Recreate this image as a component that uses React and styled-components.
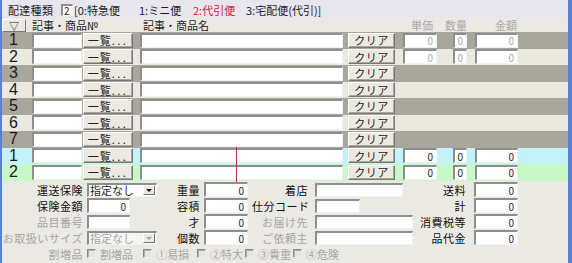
import React from "react";
import styled, { createGlobalStyle } from "styled-components";

const GlobalStyle = createGlobalStyle`
  body {
    margin: 0;
    background: #ebe9e4;
  }
`;

const TONES = {
  dark: "#a9a69d",
  light: "#ebe8e0",
  blue: "#c3f2fa",
  green: "#c8f7c8",
};

const Frame = styled.div`
  width: 572px;
  height: 263px;
  box-sizing: border-box;
  border-left: 2px solid #5b7fd4;
  border-right: 4px solid #5b7fd4;
  background: #ebe9e4;
  font-family: "Noto Sans CJK JP", sans-serif;
  font-size: 11px;
  color: #1e1e1e;
  overflow: hidden;
  display: flex;
  flex-direction: column;
`;

const TopBar = styled.div`
  height: 18px;
  box-sizing: border-box;
  padding: 2px 0 0 6px;
  background: #e7e5ee;
  display: flex;
  align-items: center;
  white-space: nowrap;
`;

const BarLabel = styled.span`
  width: 45px;
  letter-spacing: 0.3px;
`;

const KindBox = styled.span`
  width: 12px;
  height: 12px;
  margin: 0 1px 0 8px;
  box-sizing: border-box;
  border-style: solid;
  border-width: 2px 1px 1px 2px;
  border-color: #8e8e8e #f2f2f2 #f2f2f2 #8e8e8e;
  background: #fff;
  font-size: 10px;
  line-height: 9px;
  padding-left: 1px;
`;

const Option = styled.span`
  width: ${(p) => (p.$w ? `${p.$w}px` : "auto")};
  color: ${(p) => (p.$red ? "#e0203a" : "#1e1e1e")};
`;

const Header = styled.div`
  height: 14px;
  display: flex;
  align-items: flex-start;
  background: #ece9e4;
  white-space: nowrap;
`;

const SortButton = styled.button`
  width: 24px;
  height: 13px;
  margin-top: 1px;
  padding: 0;
  box-sizing: border-box;
  background: #ece9e1;
  border: 1px solid;
  border-color: #fff #777 #777 #fff;
  font-family: inherit;
  font-size: 10px;
  line-height: 10px;
  color: #222;
`;

const HeadLabel = styled.span`
  width: ${(p) => p.$w}px;
  margin-left: ${(p) => p.$ml || 0}px;
  padding-right: ${(p) => p.$pr || 0}px;
  box-sizing: border-box;
  text-align: ${(p) => (p.$right ? "right" : "left")};
  color: ${(p) => (p.$dim ? "#a8a8a8" : "#1e1e1e")};
  line-height: 15px;
`;

const RowList = styled.div`
  position: relative;
`;

const Row = styled.div`
  height: 16.5px;
  display: flex;
  align-items: center;
  background: ${(p) => TONES[p.$tone]};
`;

const RowNum = styled.span`
  width: 28px;
  padding-left: 7px;
  box-sizing: border-box;
  font-family: "Liberation Sans", Arial, sans-serif;
  font-size: 16px;
  line-height: 16px;
  color: #1a1a1a;
`;

const Field = styled.input`
  width: ${(p) => p.$w}px;
  height: ${(p) => p.$h || 15}px;
  margin: 0 0 0 ${(p) => p.$ml || 0}px;
  padding: 0 ${(p) => (p.$right ? 3 : 2)}px 0 2px;
  box-sizing: border-box;
  border-style: solid;
  border-width: 2px 1px 1px 2px;
  border-color: #8e8e8e #f2f2f2 #f2f2f2 #8e8e8e;
  border-radius: 0;
  background: #fff;
  font-family: "Noto Sans CJK JP", sans-serif;
  font-size: 10px;
  text-align: ${(p) => (p.$right ? "right" : "left")};
  color: ${(p) => (p.$dim ? "#a8a8a8" : "#1e1e1e")};
  outline: none;
`;

const PushButton = styled.button`
  width: ${(p) => p.$w}px;
  height: 15px;
  margin-left: ${(p) => p.$ml || 0}px;
  padding: 0;
  box-sizing: border-box;
  background: #ece9e1;
  border: 1px solid;
  border-color: #fff #777 #777 #fff;
  box-shadow: inset -1px -1px 0 #aca899;
  font-family: "Noto Sans CJK JP", sans-serif;
  font-size: 11px;
  line-height: 12px;
  letter-spacing: ${(p) => p.$ls || 0}px;
  color: #222;
`;

const Dots = styled.span`
  letter-spacing: 2.5px;
`;

const Marker = styled.span`
  position: absolute;
  left: 234px;
  top: 115px;
  width: 1px;
  height: 35px;
  background: #a8344e;
`;

const Bottom = styled.div`
  display: grid;
  grid-template-columns: 81px 77px 40px 52px 56px 112px 46px 102px;
  grid-auto-rows: 16px;
  align-items: center;
  padding-top: 1px;
`;

const Label = styled.div`
  text-align: right;
  white-space: nowrap;
  line-height: 14px;
  letter-spacing: 0.5px;
  color: ${(p) => (p.$dim ? "#a6a6a6" : "#111")};
`;

const Cell = styled.div`
  display: flex;
  align-items: center;
  padding-left: ${(p) => p.$pl || 0}px;
`;

const SelectBox = styled.div`
  width: 70px;
  height: 14px;
  box-sizing: border-box;
  display: flex;
  align-items: center;
  justify-content: space-between;
  border-style: solid;
  border-width: 2px 1px 1px 2px;
  border-color: #8e8e8e #f2f2f2 #f2f2f2 #8e8e8e;
  background: ${(p) => (p.$disabled ? "#f6f5f2" : "#fff")};
  color: ${(p) => (p.$disabled ? "#a6a6a6" : "#1e1e1e")};
  padding-left: 1px;
  line-height: 11px;
`;

const Arrow = styled.span`
  width: 12px;
  height: 10px;
  margin-right: 1px;
  box-sizing: border-box;
  display: flex;
  align-items: center;
  justify-content: center;
  background: #ece9e1;
  border: 1px solid;
  border-color: #fff #777 #777 #fff;

  &::after {
    content: "";
    border-left: 3px solid transparent;
    border-right: 3px solid transparent;
    border-top: 3px solid ${(p) => (p.$disabled ? "#a6a6a6" : "#111")};
  }
`;

const CheckRow = styled.div`
  grid-column: 2 / -1;
  display: flex;
  align-items: center;
  padding-left: 4px;
`;

const CheckItem = styled.span`
  width: ${(p) => (p.$w ? `${p.$w}px` : "auto")};
  display: flex;
  align-items: center;
  gap: 4px;
  color: #a6a6a6;
  white-space: nowrap;
  line-height: 14px;
`;

const CheckBox = styled.span`
  width: 9px;
  height: 9px;
  box-sizing: border-box;
  border: 1px solid;
  border-color: #8a8a8a #ececec #ececec #8a8a8a;
  background: #e6e4de;
  box-shadow: inset 1px 1px 0 #b5b2aa;
`;

const rows = [
  { n: 1, tone: "dark", nums: true, dim: true },
  { n: 2, tone: "light", nums: true, dim: true },
  { n: 3, tone: "dark" },
  { n: 4, tone: "light" },
  { n: 5, tone: "dark" },
  { n: 6, tone: "light" },
  { n: 7, tone: "dark" },
  { n: 1, tone: "blue", nums: true },
  { n: 2, tone: "green", nums: true },
];

const checks = [
  { w: 56, text: "割増品" },
  { w: 54, text: "①易損" },
  { w: 48, text: "②特大" },
  { w: 48, text: "③貴重" },
  { text: "④危険" },
];

const Num = ({ w, ml, dim }) => (
  <Field $w={w} $ml={ml} $right $dim={dim} value="0" readOnly />
);

const Select = ({ disabled }) => (
  <SelectBox $disabled={disabled}>
    指定なし
    <Arrow $disabled={disabled} />
  </SelectBox>
);

const App = () => {
  return (
    <Frame>
      <GlobalStyle />
      <TopBar>
        <BarLabel>配達種類</BarLabel>
        <KindBox>2</KindBox>
        <Option $w={65}>[0:特急便</Option>
        <Option $w={54}>1:ミニ便</Option>
        <Option $w={53} $red>2:代引便</Option>
        <Option>3:宅配便(代引)]</Option>
      </TopBar>

      <Header>
        <SortButton>▽</SortButton>
        <HeadLabel $w={111} $ml={6}>記事・商品№</HeadLabel>
        <HeadLabel $w={260}>記事・商品名</HeadLabel>
        <HeadLabel $w={34} $pr={4} $right $dim>単価</HeadLabel>
        <HeadLabel $w={30} $right $dim>数量</HeadLabel>
        <HeadLabel $w={51} $pr={1} $right $dim>金額</HeadLabel>
      </Header>

      <RowList>
        {rows.map((r, i) => (
          <Row key={i} $tone={r.tone}>
            <RowNum>{r.n}</RowNum>
            <Field $w={50} $ml={2} readOnly />
            <PushButton $w={50} $ml={1} $ls={1}>
              一覧<Dots>...</Dots>
            </PushButton>
            <Field $w={203} $ml={7} readOnly />
            <PushButton $w={47} $ml={5} $ls={0.5}>クリア</PushButton>
            {r.nums && (
              <>
                <Num w={34} ml={8} dim={r.dim} />
                <Num w={14} ml={16} dim={r.dim} />
                <Num w={43} ml={8} dim={r.dim} />
              </>
            )}
          </Row>
        ))}
        <Marker />
      </RowList>

      <Bottom>
        <Label>運送保険</Label>
        <Cell $pl={4}><Select /></Cell>
        <Label>重量</Label>
        <Cell $pl={4}><Num w={44} /></Cell>
        <Label>着店</Label>
        <Cell $pl={7}><Field $w={88} $h={14} readOnly /></Cell>
        <Label>送料</Label>
        <Cell $pl={8}><Num w={44} /></Cell>

        <Label>保険金額</Label>
        <Cell $pl={4}><Num w={43} /></Cell>
        <Label>容積</Label>
        <Cell $pl={4}><Num w={44} /></Cell>
        <Label>仕分コード</Label>
        <Cell $pl={7}><Field $w={45} $h={14} readOnly /></Cell>
        <Label>計</Label>
        <Cell $pl={8}><Num w={44} /></Cell>

        <Label $dim>品目番号</Label>
        <Cell $pl={4}><Field $w={43} $h={14} readOnly /></Cell>
        <Label>才</Label>
        <Cell $pl={4}><Num w={44} /></Cell>
        <Label $dim>お届け先</Label>
        <Cell $pl={7}><Field $w={98} $h={14} readOnly /></Cell>
        <Label>消費税等</Label>
        <Cell $pl={8}><Num w={44} /></Cell>

        <Label $dim>お取扱いサイズ</Label>
        <Cell $pl={4}><Select disabled /></Cell>
        <Label>個数</Label>
        <Cell $pl={4}><Num w={44} /></Cell>
        <Label $dim>ご依頼主</Label>
        <Cell $pl={7}><Field $w={98} $h={14} readOnly /></Cell>
        <Label>品代金</Label>
        <Cell $pl={8}><Num w={44} /></Cell>

        <Label $dim>割増品</Label>
        <CheckRow>
          {checks.map((c) => (
            <CheckItem key={c.text} $w={c.w}>
              <CheckBox />
              {c.text}
            </CheckItem>
          ))}
        </CheckRow>
      </Bottom>
    </Frame>
  );
};

export default App;
